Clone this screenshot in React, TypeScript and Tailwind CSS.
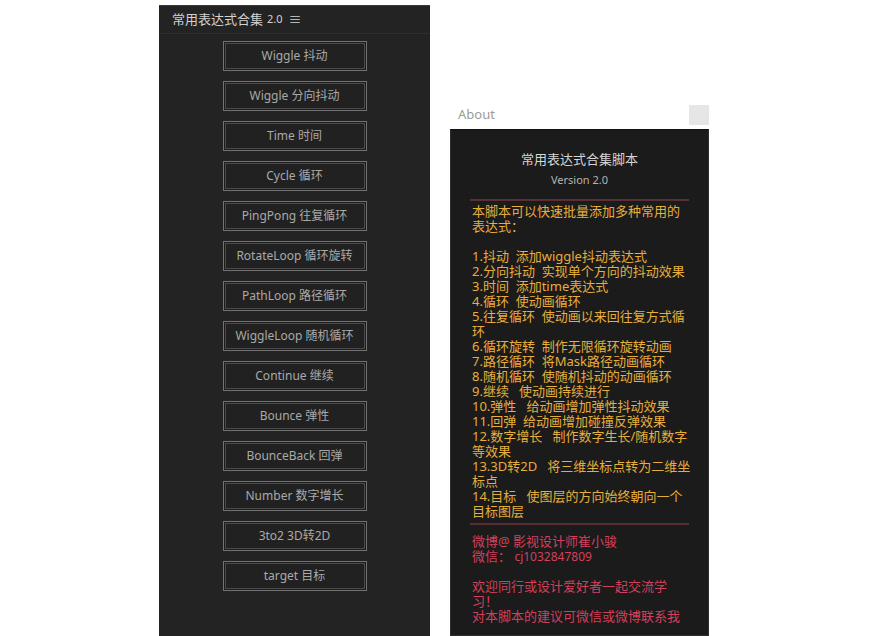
import React from "react";

const FONT = '"Noto Sans", "Noto Sans CJK SC", sans-serif';

const buttons = [
  "Wiggle 抖动",
  "Wiggle 分向抖动",
  "Time 时间",
  "Cycle 循环",
  "PingPong 往复循环",
  "RotateLoop 循环旋转",
  "PathLoop 路径循环",
  "WiggleLoop 随机循环",
  "Continue 继续",
  "Bounce 弹性",
  "BounceBack 回弹",
  "Number 数字增长",
  "3to2 3D转2D",
  "target 目标",
];

const items = [
  "1.抖动  添加wiggle抖动表达式",
  "2.分向抖动  实现单个方向的抖动效果",
  "3.时间  添加time表达式",
  "4.循环  使动画循环",
  "5.往复循环  使动画以来回往复方式循环",
  "6.循环旋转  制作无限循环旋转动画",
  "7.路径循环  将Mask路径动画循环",
  "8.随机循环  使随机抖动的动画循环",
  "9.继续   使动画持续进行",
  "10.弹性   给动画增加弹性抖动效果",
  "11.回弹  给动画增加碰撞反弹效果",
  "12.数字增长   制作数字生长/随机数字等效果",
  "13.3D转2D   将三维坐标点转为二维坐标点",
  "14.目标   使图层的方向始终朝向一个目标图层",
];

export default function App() {
  return (
    <div
      className="w-[870px] h-[636px] bg-white flex items-start overflow-hidden"
      style={{ fontFamily: FONT }}
    >
      {/* Left panel */}
      <div className="ml-[159px] mt-[5px] w-[271px] h-[631px] bg-[#232323] border-t border-[#3a3a3a] flex flex-col">
        <div className="h-[28px] flex items-center pl-[13px] border-b border-[#2e2e2e] text-[#d2d2d2]">
          <span className="text-[13px]">常用表达式合集</span>
          <span className="text-[11px] ml-[4px]">2.0</span>
          <span className="text-[13px] ml-[6px]">≡</span>
        </div>
        <div className="flex flex-col items-center gap-[10px] pt-[7px]">
          {buttons.map((b) => (
            <div
              key={b}
              className="w-[144px] h-[30px] flex items-center justify-center border border-[#737373] bg-[#212121] shadow-[inset_0_0_0_1px_#1c1c1c,inset_0_0_0_2px_#4a4a4a] text-[12px] text-[#a9a9a9]"
            >
              {b}
            </div>
          ))}
        </div>
      </div>

      {/* Right column */}
      <div className="ml-[20px] mt-[105px] w-[259px] flex flex-col">
        <div className="h-[20px] flex items-center justify-between">
          <span className="ml-[8px] text-[13px] text-[#9a9a9a]">About</span>
          <div className="w-[20px] h-[20px] bg-[#e6e6e6]" />
        </div>
        <div className="mt-[4px] h-[507px] bg-[#1b1b1b] border border-[#2e2e2e] border-t-[#111] flex flex-col">
          <div className="pt-[19px] text-center text-[13px] leading-[20px] text-[#d6d6d6]">
            常用表达式合集脚本
          </div>
          <div className="mt-[3px] text-center text-[11px] leading-[16px] text-[#b4b4b4]">
            Version 2.0
          </div>
          <div className="mx-[19px] mt-[11px] h-[2px] bg-[#5a2e35]" />
          <div className="mt-[3px] pl-[21px] w-[240px] text-[13px] leading-[15px] text-[#e6ae3c] whitespace-pre-wrap">
            <div>本脚本可以快速批量添加多种常用的表达式：</div>
            <div className="h-[15px]" />
            {items.map((t) => (
              <div key={t}>{t}</div>
            ))}
          </div>
          <div className="mx-[19px] mt-[4px] h-[2px] bg-[#5a2e35]" />
          <div className="mt-[9px] pl-[21px] w-[240px] text-[13px] leading-[15px] text-[#d2405c]">
            <div>微博@ 影视设计师崔小骏</div>
            <div>
              微信：&nbsp;<span className="text-[12px]">cj1032847809</span>
            </div>
            <div className="h-[15px]" />
            <div>欢迎同行或设计爱好者一起交流学习！</div>
            <div>对本脚本的建议可微信或微博联系我</div>
          </div>
        </div>
      </div>
    </div>
  );
}
